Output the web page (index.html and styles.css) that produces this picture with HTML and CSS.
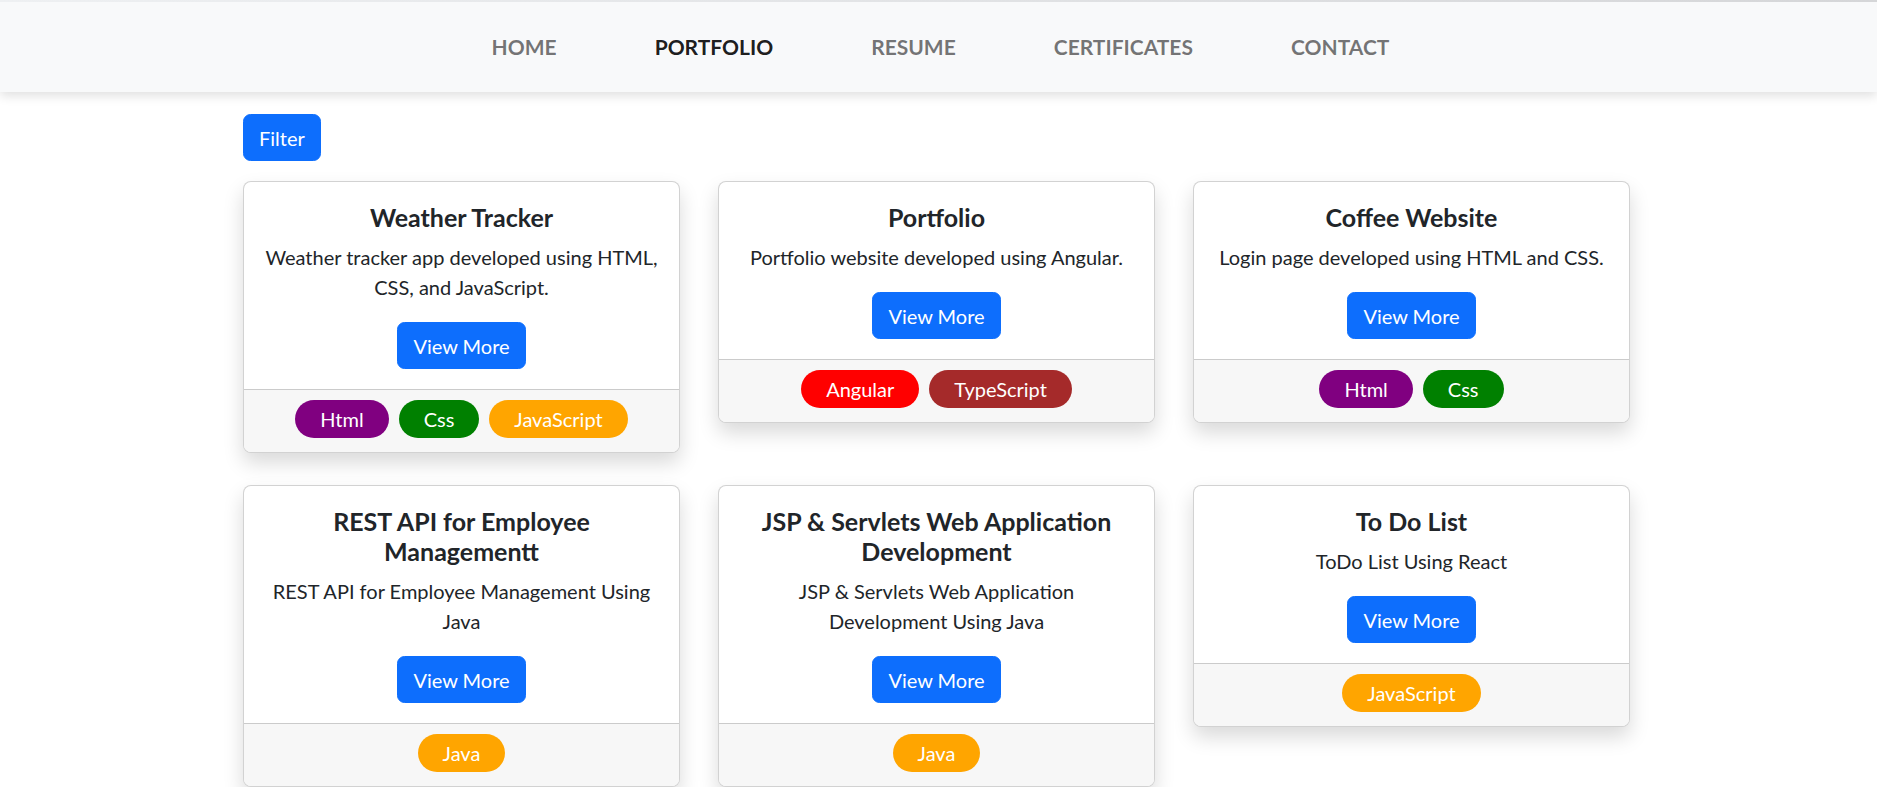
FILE: index.html
```html
<!DOCTYPE html>
<html lang="en">
<head>
<meta charset="utf-8">
<title>Portfolio</title>
<link rel="stylesheet" href="styles.css">
</head>
<body>
<nav class="navbar">
  <ul class="nav-list">
    <li><a class="nav-link" href="#">HOME</a></li>
    <li><a class="nav-link active" href="#">PORTFOLIO</a></li>
    <li><a class="nav-link" href="#">RESUME</a></li>
    <li><a class="nav-link" href="#">CERTIFICATES</a></li>
    <li><a class="nav-link" href="#">CONTACT</a></li>
  </ul>
</nav>
<main class="container">
  <button class="btn">Filter</button>
  <div class="grid">
    <div class="card">
      <div class="card-body">
        <h5 class="card-title">Weather Tracker</h5>
        <p class="card-text">Weather tracker app developed using HTML, CSS, and JavaScript.</p>
        <button class="btn">View More</button>
      </div>
      <div class="card-footer">
        <span class="badge html">Html</span>
        <span class="badge css">Css</span>
        <span class="badge js">JavaScript</span>
      </div>
    </div>
    <div class="card">
      <div class="card-body">
        <h5 class="card-title">Portfolio</h5>
        <p class="card-text">Portfolio website developed using Angular.</p>
        <button class="btn">View More</button>
      </div>
      <div class="card-footer">
        <span class="badge angular">Angular</span>
        <span class="badge ts">TypeScript</span>
      </div>
    </div>
    <div class="card">
      <div class="card-body">
        <h5 class="card-title">Coffee Website</h5>
        <p class="card-text">Login page developed using HTML and CSS.</p>
        <button class="btn">View More</button>
      </div>
      <div class="card-footer">
        <span class="badge html">Html</span>
        <span class="badge css">Css</span>
      </div>
    </div>
    <div class="card">
      <div class="card-body">
        <h5 class="card-title">REST API for Employee Managementt</h5>
        <p class="card-text">REST API for Employee Management Using Java</p>
        <button class="btn">View More</button>
      </div>
      <div class="card-footer">
        <span class="badge java">Java</span>
      </div>
    </div>
    <div class="card">
      <div class="card-body">
        <h5 class="card-title">JSP &amp; Servlets Web Application Development</h5>
        <p class="card-text">JSP &amp; Servlets Web Application Development Using Java</p>
        <button class="btn">View More</button>
      </div>
      <div class="card-footer">
        <span class="badge java">Java</span>
      </div>
    </div>
    <div class="card">
      <div class="card-body">
        <h5 class="card-title">To Do List</h5>
        <p class="card-text">ToDo List Using React</p>
        <button class="btn">View More</button>
      </div>
      <div class="card-footer">
        <span class="badge js">JavaScript</span>
      </div>
    </div>
  </div>
</main>
</body>
</html>
```
FILE: styles.css
```css
* { box-sizing: border-box; }
html, body { margin: 0; padding: 0; }
body {
  font-family: Lato, "Noto Sans", sans-serif;
  font-size: 20px;
  line-height: 30px;
  color: #212529;
  background: #fff;
}
.navbar {
  height: 92px;
  padding-top: 2px;
  background: linear-gradient(to right, #eef0f2, #d5d6d8) top / 100% 2px no-repeat, #f8f9fa;
  box-shadow: 0 4px 10px rgba(0, 0, 0, 0.12);
  display: flex;
  align-items: center;
  justify-content: center;
  position: relative;
  z-index: 1;
}
.nav-list {
  list-style: none;
  margin: 0;
  padding: 0 0 0 4px;
  display: flex;
  gap: 98px;
}
.nav-link {
  display: block;
  text-decoration: none;
  font-size: 21px;
  font-weight: 700;
  color: rgba(0, 0, 0, 0.55);
  line-height: 30px;
}
.nav-link.active { color: rgba(0, 0, 0, 0.9); }
.container {
  width: 1391px;
  margin: 0 auto;
  padding: 22px 4px 0 0;
}
.btn {
  font-family: inherit;
  font-size: 20px;
  line-height: 30px;
  padding: 7.5px 15px;
  color: #fff;
  background: #0d6efd;
  border: 1px solid #0d6efd;
  border-radius: 7.5px;
  cursor: pointer;
}
.grid {
  margin-top: 20px;
  display: grid;
  grid-template-columns: repeat(3, 437px);
  column-gap: 38px;
  row-gap: 32px;
  align-items: start;
}
.card {
  border: 1px solid rgba(0, 0, 0, 0.175);
  border-radius: 8px;
  box-shadow: 0 10px 20px rgba(0, 0, 0, 0.15);
  overflow: hidden;
  background: #fff;
}
.card-body {
  padding: 20px;
  text-align: center;
}
.card-title {
  margin: 0 0 10px;
  font-size: 25px;
  line-height: 30px;
  font-weight: 700;
}
.card-text {
  margin: 0 0 20px;
}
.card-footer {
  border-top: 1px solid rgba(0, 0, 0, 0.175);
  background: #f7f7f7;
  padding: 10px 20px 14px;
  display: flex;
  justify-content: center;
  gap: 10px;
}
.badge {
  display: inline-block;
  height: 38px;
  line-height: 38px;
  padding: 0 25px;
  border-radius: 19px;
  color: #fff;
  font-size: 20px;
}
.html { background: #800080; }
.css { background: #008000; }
.js, .java { background: #ffa500; }
.angular { background: #ff0000; }
.ts { background: #a52a2a; }
```
